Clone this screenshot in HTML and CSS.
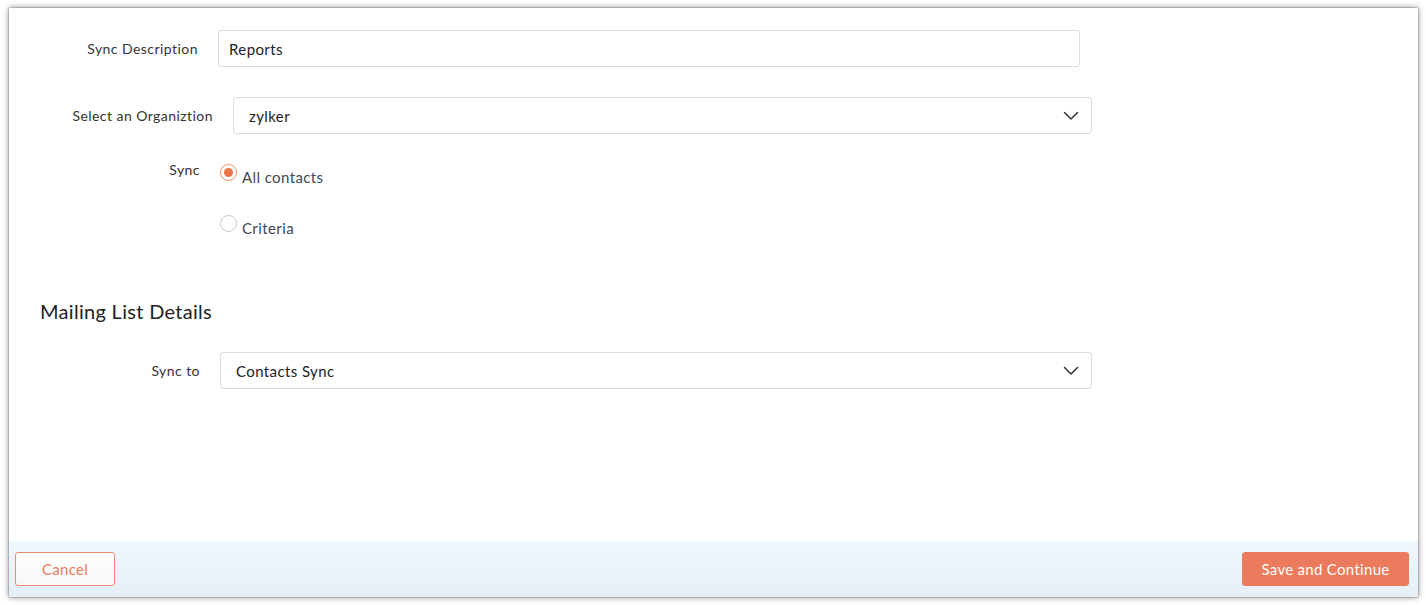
FILE: index.html
```html
<!DOCTYPE html>
<html>
<head>
<meta charset="utf-8">
<link rel="stylesheet" href="styles.css">
</head>
<body>
<div class="panel">
  <div class="content">
    <div class="row row-desc">
      <label class="label label-desc">Sync Description</label>
      <div class="field field-desc">Reports</div>
    </div>
    <div class="row row-org">
      <label class="label label-org">Select an Organiztion</label>
      <div class="field field-org select">
        <span>zylker</span>
        <svg class="chev" width="16" height="10" viewBox="0 0 16 10"><path d="M1.5 1.5 L8 8 L14.5 1.5" fill="none" stroke="#333" stroke-width="1.5" stroke-linecap="round" stroke-linejoin="round"/></svg>
      </div>
    </div>
    <div class="row row-sync">
      <label class="label label-sync">Sync</label>
      <div class="radios">
        <div class="radio-item"><span class="radio checked"></span><span class="radio-text">All contacts</span></div>
        <div class="radio-item"><span class="radio"></span><span class="radio-text">Criteria</span></div>
      </div>
    </div>
    <h2 class="heading">Mailing List Details</h2>
    <div class="row row-to">
      <label class="label label-to">Sync to</label>
      <div class="field field-to select">
        <span>Contacts Sync</span>
        <svg class="chev" width="16" height="10" viewBox="0 0 16 10"><path d="M1.5 1.5 L8 8 L14.5 1.5" fill="none" stroke="#333" stroke-width="1.5" stroke-linecap="round" stroke-linejoin="round"/></svg>
      </div>
    </div>
  </div>
  <div class="footer">
    <button class="btn btn-cancel">Cancel</button>
    <button class="btn btn-save">Save and Continue</button>
  </div>
</div>
</body>
</html>
```
FILE: styles.css
```css
html, body {
  margin: 0;
  padding: 0;
  background: #ffffff;
}
body {
  font-family: Lato, "Open Sans", sans-serif;
  color: #333;
  padding: 8px 8px 8px 9px;
  box-sizing: border-box;
  height: 605px;
}
.panel {
  height: 589px;
  background: #fff;
  box-shadow: 0 0 1px rgba(0,0,0,0.7), 0 0 6px rgba(0,0,0,0.5);
  display: flex;
  flex-direction: column;
}
.content {
  flex: 1;
  padding-top: 22px;
}
.row {
  display: flex;
  align-items: center;
  gap: 20px;
}
.label {
  text-align: right;
  font-size: 14px;
  color: #333;
  letter-spacing: 0.45px;
  flex: none;
}
.label-desc { width: 189px; }
.label-org { width: 204px; }
.label-sync { width: 191px; align-self: flex-start; margin-top: -3px; }
.label-to { width: 191px; }
.field {
  height: 37px;
  box-sizing: border-box;
  border: 1px solid #dcdcdc;
  border-radius: 3px;
  display: flex;
  align-items: center;
  font-size: 15px;
  color: #222;
  letter-spacing: 0.4px;
}
.field-desc { width: 862px; padding-left: 10px; }
.field-org { width: 859px; padding-left: 15px; }
.field-to { width: 872px; padding-left: 15px; }
.select { justify-content: space-between; padding-right: 12px; }
.chev { display: block; }
.row-org { margin-top: 30px; }
.row-sync { margin-top: 30px; }
.radios {
  display: flex;
  flex-direction: column;
  gap: 29px;
}
.radio-item {
  display: flex;
  align-items: flex-start;
  gap: 5px;
}
.radio {
  width: 17px;
  height: 17px;
  box-sizing: border-box;
  border: 1px solid #c8c8c8;
  border-radius: 50%;
  display: flex;
  align-items: center;
  justify-content: center;
  flex: none;
}
.radio.checked { border-color: #f08c68; }
.radio.checked::after {
  content: "";
  width: 9px;
  height: 9px;
  border-radius: 50%;
  background: #ee7446;
}
.radio-text {
  font-size: 15px;
  color: #3f4756;
  margin-top: 4px;
  letter-spacing: 0.4px;
}
.heading {
  margin: 62px 0 0 31px;
  font-size: 20px;
  font-weight: normal;
  color: #222;
  letter-spacing: 0.3px;
}
.row-to { margin-top: 29px; }
.footer {
  height: 56px;
  flex: none;
  background: linear-gradient(#f0f7fe, #e6eef6);
  display: flex;
  justify-content: space-between;
  align-items: center;
  padding: 0 9px 0 6px;
}
.btn {
  height: 34px;
  border-radius: 3px;
  font-family: Lato, "Open Sans", sans-serif;
  font-size: 15px;
  letter-spacing: 0.3px;
  cursor: pointer;
}
.btn-cancel {
  width: 100px;
  background: linear-gradient(#ffffff, #f7f7f7);
  border: 1px solid #ef8c70;
  color: #ef7c5c;
}
.btn-save {
  width: 167px;
  background: #ec7a5c;
  border: 1px solid #ec7a5c;
  color: #fff;
}
```
